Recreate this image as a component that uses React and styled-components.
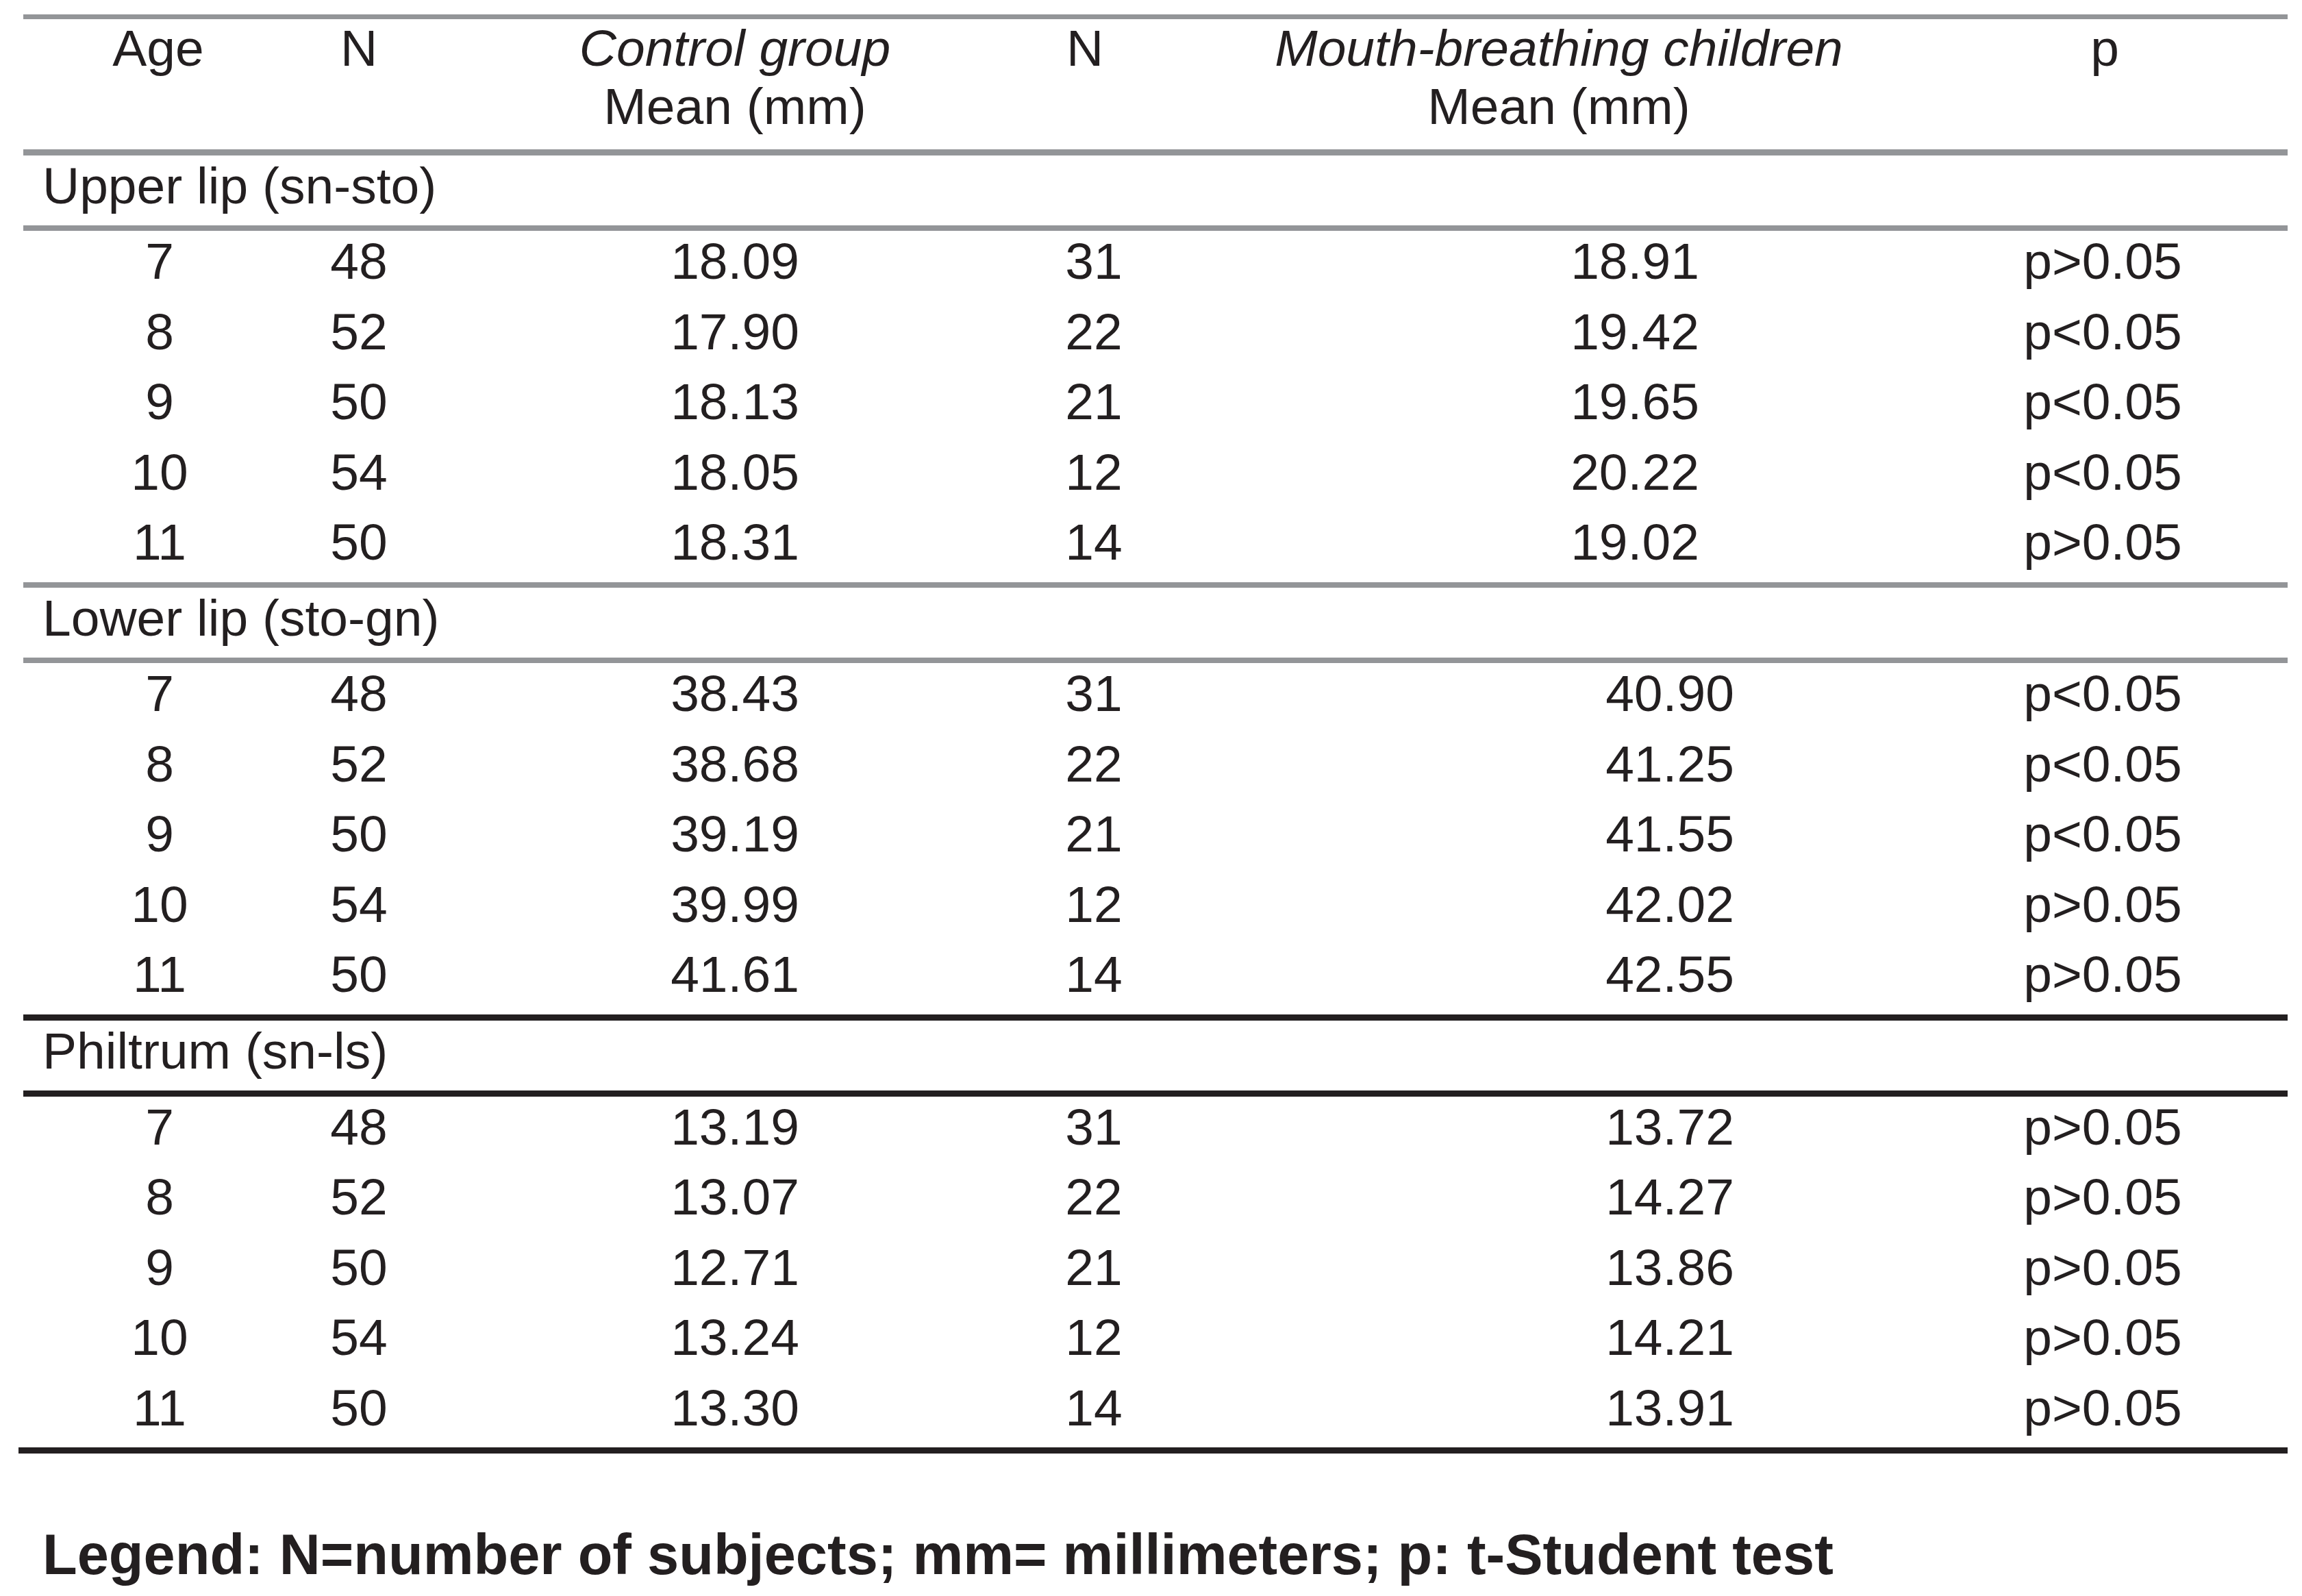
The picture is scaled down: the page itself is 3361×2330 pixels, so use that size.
import React from 'react';
import styled, { createGlobalStyle } from 'styled-components';

const ink = '#231f20';
const grey = '#939598';

const GlobalStyle = createGlobalStyle`
  body {
    margin: 0;
    background: #ffffff;
    color: ${ink};
    font-family: "Liberation Sans", Arial, sans-serif;
  }
`;

// each column is [center, width]; spacer tracks go between them
const buildTracks = cols => {
  let x = 0;
  return cols.map(([center, width]) => {
    const start = center - width / 2;
    const gap = start - x;
    x = start + width;
    return `${gap}px ${width}px`;
  }).join(' ');
};

const headCols = [[197, 260], [490, 200], [1039, 700], [1550, 200], [2242, 1000], [3039, 260]];
const bodyCols = shift => [[199, 260], [490, 200], [1039, 400], [1563, 200], [2353 + shift, 400], [3036, 300]];

const Page = styled.div`
  width: 3306px;
  padding: 21px 0 60px 34px;
`;

const Rule = styled.div`
  height: ${props => props.$thick}px;
  background: ${props => props.$dark ? ink : grey};
  margin-left: ${props => props.$offset || 0}px;
`;

const Grid = styled.div`
  display: grid;
  grid-template-columns: ${props => buildTracks(props.$cols)};
  font-size: 75px;
  white-space: nowrap;
`;

const Head = styled(Grid)`
  line-height: 85.4px;
  padding-bottom: 19.5px;
`;

const Row = styled(Grid)`
  box-sizing: border-box;
  height: 102.5px;
  line-height: 88px;
`;

const Cell = styled.div`
  grid-column: ${props => props.$col * 2};
  text-align: center;
`;

const Em = styled.span`
  font-style: italic;
`;

const SectionLabel = styled.div`
  box-sizing: border-box;
  height: 101.8px;
  padding-left: 28px;
  font-size: 75px;
  line-height: 88px;
`;

const Legend = styled.p`
  margin: 105.5px 0 0;
  padding-left: 28px;
  font-size: 83px;
  font-weight: 700;
  line-height: 83px;
  white-space: nowrap;
`;

const sections = [
  {
    label: 'Upper lip (sn-sto)',
    shift: 0,
    labelRule: false,
    endRule: false,
    rows: [
      ['7', '48', '18.09', '31', '18.91', 'p>0.05'],
      ['8', '52', '17.90', '22', '19.42', 'p<0.05'],
      ['9', '50', '18.13', '21', '19.65', 'p<0.05'],
      ['10', '54', '18.05', '12', '20.22', 'p<0.05'],
      ['11', '50', '18.31', '14', '19.02', 'p>0.05']
    ]
  },
  {
    label: 'Lower lip (sto-gn)',
    shift: 51,
    labelRule: false,
    endRule: true,
    rows: [
      ['7', '48', '38.43', '31', '40.90', 'p<0.05'],
      ['8', '52', '38.68', '22', '41.25', 'p<0.05'],
      ['9', '50', '39.19', '21', '41.55', 'p<0.05'],
      ['10', '54', '39.99', '12', '42.02', 'p>0.05'],
      ['11', '50', '41.61', '14', '42.55', 'p>0.05']
    ]
  },
  {
    label: 'Philtrum (sn-ls)',
    shift: 51,
    labelRule: true,
    endRule: true,
    last: true,
    rows: [
      ['7', '48', '13.19', '31', '13.72', 'p>0.05'],
      ['8', '52', '13.07', '22', '14.27', 'p>0.05'],
      ['9', '50', '12.71', '21', '13.86', 'p>0.05'],
      ['10', '54', '13.24', '12', '14.21', 'p>0.05'],
      ['11', '50', '13.30', '14', '13.91', 'p>0.05']
    ]
  }
];

const App = () => (
  <>
    <GlobalStyle />
    <Page>
      <Rule $thick={7} />
      <Head $cols={headCols}>
        <Cell $col={1}>Age</Cell>
        <Cell $col={2}>N</Cell>
        <Cell $col={3}><Em>Control group</Em><br />Mean (mm)</Cell>
        <Cell $col={4}>N</Cell>
        <Cell $col={5}><Em>Mouth-breathing children</Em><br />Mean (mm)</Cell>
        <Cell $col={6}>p</Cell>
      </Head>
      <Rule $thick={8.5} />
      {sections.map(section => (
        <React.Fragment key={section.label}>
          <SectionLabel>{section.label}</SectionLabel>
          <Rule $thick={section.labelRule ? 9 : 8.5} $dark={section.labelRule} />
          {section.rows.map(row => (
            <Row key={row[0]} $cols={bodyCols(section.shift)}>
              {row.map((value, i) => (
                <Cell key={i} $col={i + 1}>{value}</Cell>
              ))}
            </Row>
          ))}
          <Rule
            $thick={section.endRule ? 9 : 8.5}
            $dark={section.endRule}
            $offset={section.last ? -7 : 0}
          />
        </React.Fragment>
      ))}
      <Legend>Legend: N=number of subjects; mm= millimeters; p: t-Student test</Legend>
    </Page>
  </>
);

export default App;
